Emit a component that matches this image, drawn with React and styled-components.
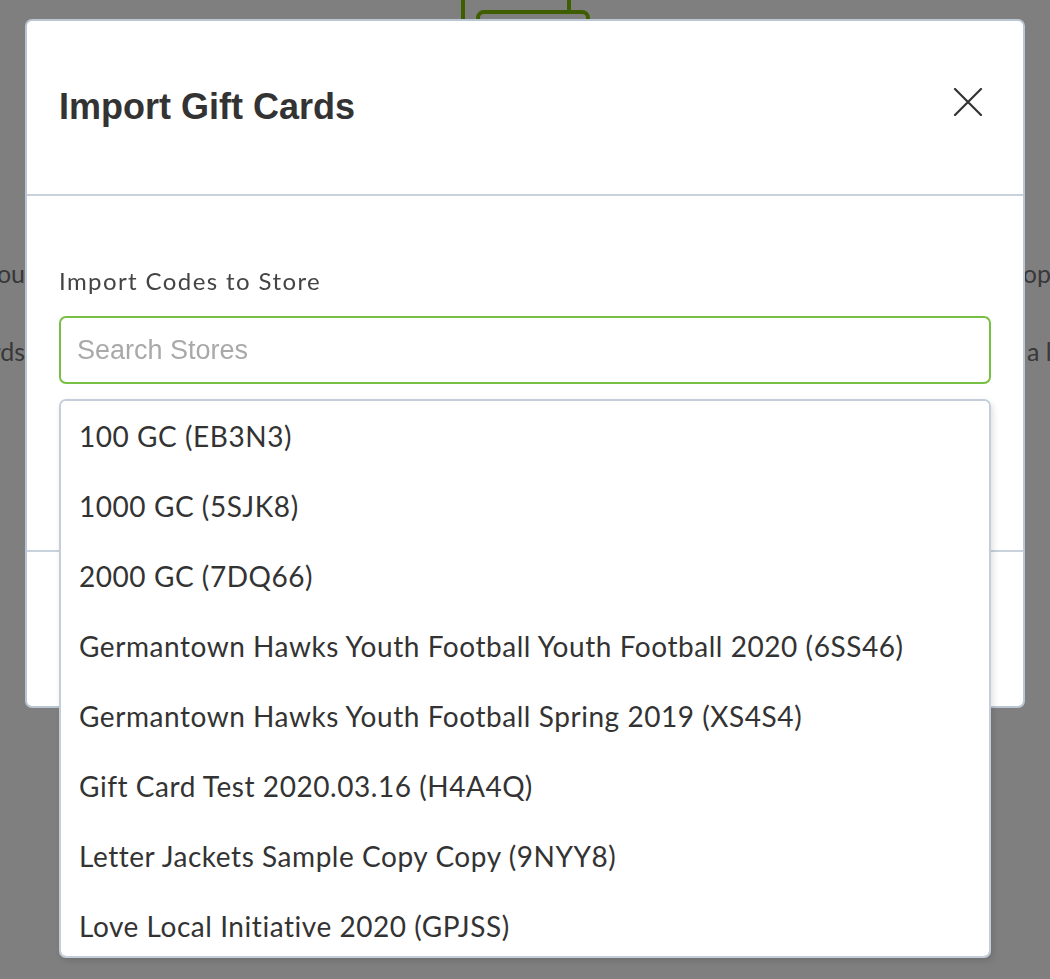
import React, { useState } from "react";
import styled, { createGlobalStyle } from "styled-components";

const GlobalStyle = createGlobalStyle`
  * { box-sizing: border-box; }
  html, body { margin: 0; padding: 0; height: 100%; }
  body {
    font-family: "Lato", "Noto Sans", sans-serif;
    background: #ffffff;
    overflow: hidden;
  }
`;

const stores = [
  { name: "100 GC", code: "EB3N3" },
  { name: "1000 GC", code: "5SJK8" },
  { name: "2000 GC", code: "7DQ66" },
  { name: "Germantown Hawks Youth Football Youth Football 2020", code: "6SS46" },
  { name: "Germantown Hawks Youth Football Spring 2019", code: "XS4S4" },
  { name: "Gift Card Test 2020.03.16", code: "H4A4Q" },
  { name: "Letter Jackets Sample Copy Copy", code: "9NYY8" },
  { name: "Love Local Initiative 2020", code: "GPJSS" },
];

export default function App() {
  const [query, setQuery] = useState("");

  const filtered = stores.filter((s) =>
    `${s.name} (${s.code})`.toLowerCase().includes(query.toLowerCase())
  );

  return (
    <>
      <GlobalStyle />
      <Page>
        <Connector width="140" height="24" viewBox="0 0 140 24">
          <path d="M2 0 V24 M108 0 V14" stroke="#7cbc00" strokeWidth="4" fill="none" />
          <rect x="17" y="12" width="110" height="40" rx="6" stroke="#7cbc00" strokeWidth="4" fill="none" />
        </Connector>
        <PageRow>
          <LeftCut>Choose where to send the codes you</LeftCut>
          <RightCut>copy into the store</RightCut>
        </PageRow>
        <PageRow>
          <LeftCut>Upload a list of gift cards</LeftCut>
          <RightCut $indent={17}>a list</RightCut>
        </PageRow>
      </Page>

      <Overlay>
        <Modal>
          <Header>
            <Title>Import Gift Cards</Title>
            <CloseButton aria-label="Close">
              <svg width="30" height="28" viewBox="0 0 30 28">
                <path d="M2 1 L28 27 M28 1 L2 27" stroke="#333" strokeWidth="2.2" strokeLinecap="round" />
              </svg>
            </CloseButton>
          </Header>
          <Body>
            <Label htmlFor="store-search">Import Codes to Store</Label>
            <SearchInput
              id="store-search"
              placeholder="Search Stores"
              value={query}
              onChange={(e) => setQuery(e.target.value)}
            />
            <Dropdown>
              {filtered.map((s) => (
                <Option key={s.code}>
                  {s.name} ({s.code})
                </Option>
              ))}
            </Dropdown>
          </Body>
          <Footer />
        </Modal>
      </Overlay>
    </>
  );
}

const Page = styled.div`
  height: 100vh;
  display: flex;
  flex-direction: column;
  color: #707070;
  font-size: 25px;
`;

const Connector = styled.svg`
  display: block;
  margin-left: 461px;
  margin-bottom: 234px;
`;

const PageRow = styled.div`
  display: flex;
  justify-content: space-between;
  height: 78px;
  line-height: 30px;
  white-space: nowrap;
`;

const LeftCut = styled.div`
  width: 25px;
  overflow: hidden;
  display: flex;
  justify-content: flex-end;
`;

const RightCut = styled.div`
  width: 40px;
  overflow: hidden;
  padding-left: ${(p) => p.$indent || 1}px;
`;

const Overlay = styled.div`
  position: fixed;
  inset: 0;
  background: rgba(0, 0, 0, 0.5);
  padding: 19px 25px;
`;

const Modal = styled.div`
  width: 1000px;
  height: 689px;
  background: #fff;
  border: 2px solid #bac6d2;
  border-radius: 7px;
  display: flex;
  flex-direction: column;
`;

const Header = styled.div`
  height: 175px;
  flex-shrink: 0;
  display: flex;
  align-items: center;
  justify-content: space-between;
  padding: 0 40px 0 32px;
  border-bottom: 2px solid #c8d2dc;
`;

const Title = styled.h2`
  margin: 0 0 2px;
  font-family: "Liberation Sans", Arial, sans-serif;
  font-weight: 700;
  font-size: 36px;
  color: #333;
`;

const CloseButton = styled.button`
  border: none;
  background: none;
  padding: 0;
  margin-top: -12px;
  cursor: pointer;
  display: flex;
`;

const Body = styled.div`
  position: relative;
  height: 356px;
  flex-shrink: 0;
  padding: 71px 32px 0;
  display: flex;
  flex-direction: column;
  border-bottom: 2px solid #c8d2dc;
`;

const Label = styled.label`
  font-size: 24px;
  letter-spacing: 1.4px;
  color: #444;
  line-height: 28px;
  margin-bottom: 21px;
`;

const SearchInput = styled.input`
  height: 68px;
  width: 100%;
  border: 2px solid #78c043;
  border-radius: 7px;
  padding: 0 16px;
  font-family: "Liberation Sans", Arial, sans-serif;
  font-size: 27px;
  color: #333;
  outline: none;
  &::placeholder {
    color: #a9a9a9;
  }
`;

const Dropdown = styled.ul`
  position: absolute;
  top: 203px;
  left: 32px;
  right: 32px;
  max-height: 559px;
  overflow-y: auto;
  scrollbar-width: none;
  margin: 0;
  padding: 0;
  list-style: none;
  background: #fff;
  border: 2px solid #c3ceda;
  border-radius: 7px;
  box-shadow: 2px 3px 6px rgba(0, 0, 0, 0.12);
  z-index: 2;
  &::-webkit-scrollbar {
    display: none;
  }
`;

const Option = styled.li`
  height: 70px;
  flex-shrink: 0;
  display: flex;
  align-items: center;
  padding: 0 18px;
  font-size: 28px;
  letter-spacing: 0.55px;
  color: #333;
  white-space: nowrap;
  cursor: pointer;
`;

const Footer = styled.div`
  flex: 1;
`;
